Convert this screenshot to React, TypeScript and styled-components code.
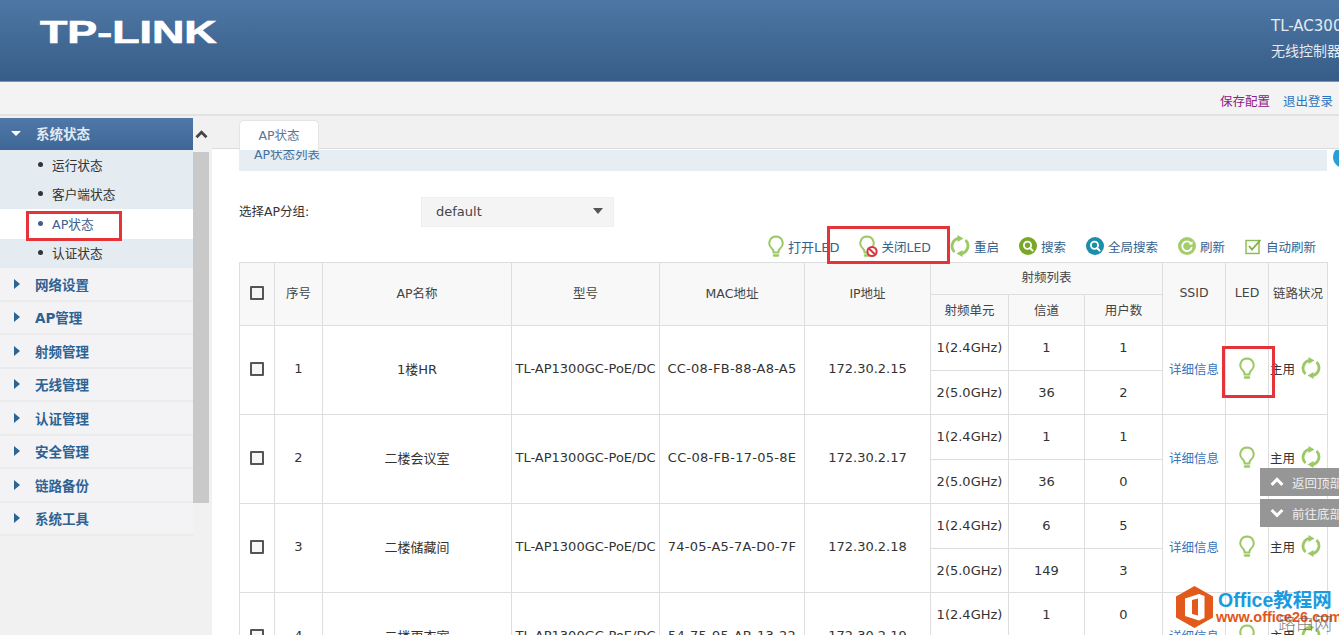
import React from "react";
import styled, { createGlobalStyle } from "styled-components";

const Global = createGlobalStyle`
  html, body { margin: 0; padding: 0; background: #fff; overflow: hidden; }
  * { box-sizing: border-box; }
  body { font-family: "DejaVu Sans", "Noto Sans CJK SC", sans-serif; font-size: 13px; color: #333; }
`;

const Page = styled.div`
  position: relative;
  width: 1339px;
  height: 635px;
  overflow: hidden;
  background: #fff;
`;

const Header = styled.header`
  height: 82px;
  display: flex;
  justify-content: space-between;
  background: linear-gradient(#4f77a5, #365d87);
  border-bottom: 1px solid #7f93a8;
`;

const Logo = styled.div`
  margin: 14px 0 0 40px;
  height: 36px;
  font: 700 32px/36px "Liberation Sans", sans-serif;
  color: #fff;
  -webkit-text-stroke: 0.7px #fff;
  transform: scaleX(1.4);
  transform-origin: left center;
`;

const Product = styled.div`
  width: 68px;
  padding-top: 16px;
  white-space: nowrap;
  color: #e3eaf2;
  font-size: 14px;
`;

const ProductLine = styled.div<{ $size: number; $height: number }>`
  height: ${(p) => p.$height}px;
  line-height: 20px;
  font-size: ${(p) => p.$size}px;
`;

const TopBar = styled.div`
  height: 34px;
  padding: 10px 6px 0 0;
  display: flex;
  justify-content: flex-end;
  gap: 13px;
  background: #f3f3f3;
  border-bottom: 2px solid #e2e2e2;
  font-size: 12.5px;
  line-height: 20px;
`;

const TopLink = styled.a<{ $color: string }>`
  color: ${(p) => p.$color};
`;

const Body = styled.div`
  display: flex;
  height: 519px;
`;

const Sidebar = styled.nav`
  width: 193px;
  padding-top: 2px;
  background: #f1f1f1;
  flex: none;
`;

const GroupHead = styled.div`
  height: 32px;
  display: flex;
  align-items: center;
  padding: 0 0 2px 11px;
  gap: 15px;
  background: linear-gradient(#4e78a8, #3f6796);
  color: #e2eaf3;
  font-weight: 700;
  font-size: 13.5px;
`;

const SubList = styled.div`
  background: #e4ecf2;
`;

const SubItem = styled.div<{ $active?: boolean }>`
  height: 29.5px;
  display: flex;
  align-items: center;
  padding: 0 0 1px 38px;
  gap: 9px;
  font-size: 12.7px;
  background: ${(p) => (p.$active ? "#fff" : "transparent")};
  color: ${(p) => (p.$active ? "#3e5f8e" : "#333")};
`;

const Bullet = styled.i`
  width: 5px;
  height: 5px;
  border-radius: 50%;
  background: currentColor;
`;

const Group = styled.div`
  height: 33.5px;
  display: flex;
  align-items: center;
  padding-left: 14px;
  gap: 15px;
  background: #f3f3f5;
  border-bottom: 2px solid #ebebeb;
  color: #2e6292;
  font-weight: 700;
  font-size: 13.5px;
`;

const CaretRight = styled.i`
  width: 0;
  height: 0;
  border-left: 6px solid #2a6593;
  border-top: 5px solid transparent;
  border-bottom: 5px solid transparent;
`;

const CaretDown = styled.i`
  width: 0;
  height: 0;
  border-top: 5px solid #fff;
  border-left: 5px solid transparent;
  border-right: 5px solid transparent;
`;

const Rail = styled.div`
  width: 19px;
  flex: none;
  background: #f1f1f1;
`;

const RailTop = styled.div`
  height: 36px;
  width: 16px;
  padding-top: 14px;
  display: flex;
  justify-content: center;
`;

const RailThumb = styled.div`
  width: 16px;
  height: 351px;
  background: #c9c9c9;
`;

const Content = styled.main`
  flex: 1;
  min-width: 0;
`;

const TabStrip = styled.div`
  height: 33px;
  padding: 4px 0 0 27px;
  background: #f1f1f1;
  border-bottom: 1px solid #dcdcdc;
`;

const Tab = styled.div`
  position: relative;
  z-index: 1;
  width: 80px;
  height: 30px;
  background: #fff;
  border: 1px solid #e4e4e4;
  border-bottom: 0;
  border-radius: 5px 5px 0 0;
  text-align: center;
  line-height: 30px;
  font-size: 12.5px;
  color: #5b7593;
`;

const Panel = styled.section`
  padding: 1px 12px 0 27px;
`;

const Band = styled.div`
  height: 21px;
  padding-left: 15px;
  background: #e6eef4;
  color: #44719e;
  font-size: 12.5px;
  line-height: 10px;
`;

const FormRow = styled.div`
  margin-top: 26px;
  height: 30px;
  display: flex;
  align-items: center;
`;

const FormLabel = styled.div`
  width: 182px;
  padding-bottom: 3px;
  font-size: 12.5px;
`;

const Select = styled.div`
  width: 193px;
  height: 30px;
  padding: 0 10px 2px 14px;
  display: flex;
  align-items: center;
  justify-content: space-between;
  background: #f4f4f4;
  border: 1px solid #efefef;
  color: #444;
  font-size: 13px;
`;

const SelectCaret = styled.i`
  width: 0;
  height: 0;
  border-top: 6px solid #555;
  border-left: 5px solid transparent;
  border-right: 5px solid transparent;
`;

const Toolbar = styled.div`
  height: 35px;
  padding: 7px 11px 0 0;
  display: flex;
  justify-content: flex-end;
  align-items: flex-start;
  gap: 20px;
`;

const Tool = styled.div<{ $size?: number; $tight?: boolean }>`
  display: flex;
  align-items: center;
  height: 24px;
  gap: ${(p) => (p.$tight ? 3 : 4)}px;
  margin-right: ${(p) => (p.$tight ? -1 : 0)}px;
  color: #33638f;
  font-size: ${(p) => p.$size ?? 12.5}px;
  white-space: nowrap;
`;

const Table = styled.table`
  width: 1088px;
  table-layout: fixed;
  border-collapse: collapse;
  border: 1px solid #dcdcdc;
`;

const Th = styled.th<{ $h?: number }>`
  height: ${(p) => p.$h ?? 31}px;
  padding: 0 0 4px;
  border: 1px solid #dedede;
  background: #f8f8f8;
  font-weight: 400;
  font-size: 12.5px;
  color: #444;
  text-align: center;
  white-space: nowrap;
`;

const SubTh = styled(Th)`
  padding-bottom: 2px;
`;

const Td = styled.td`
  height: 44px;
  padding: 0;
  border: 1px solid #dedede;
  text-align: center;
  white-space: nowrap;
  font-size: 13px;
  color: #333;
`;

const TopTd = styled(Td)`
  height: 45px;
  padding-bottom: 2px;
`;

const SpanTd = styled(Td)`
  padding-bottom: 4px;
`;

const Mac = styled.span`
  letter-spacing: 0.25px;
`;

const Box = styled.span`
  display: inline-block;
  vertical-align: middle;
  width: 14px;
  height: 14px;
  background: #f6f6f6;
  border: 2px solid #555;
  border-radius: 1px;
`;

const DetailLink = styled.a`
  color: #3a73bb;
  font-size: 12.5px;
`;

const LinkState = styled.div`
  display: flex;
  align-items: center;
  gap: 6px;
  padding-left: 1px;
  font-size: 12.5px;
`;

const IconWrap = styled.span`
  display: inline-flex;
  flex: none;
  vertical-align: middle;
`;

const Mark = styled.div<{ $x: number; $y: number; $w: number; $h: number }>`
  position: absolute;
  left: ${(p) => p.$x}px;
  top: ${(p) => p.$y}px;
  width: ${(p) => p.$w}px;
  height: ${(p) => p.$h}px;
  border: 3px solid #e5333a;
  pointer-events: none;
`;

const Floats = styled.div`
  position: absolute;
  left: 1260px;
  top: 468px;
  width: 79px;
  display: flex;
  flex-direction: column;
  gap: 3px;
`;

const FloatBtn = styled.div`
  height: 28px;
  padding-left: 10px;
  display: flex;
  align-items: center;
  gap: 8px;
  background: #969696;
  color: #eee;
  font-size: 12.5px;
  white-space: nowrap;
  overflow: hidden;
`;

const HelpDot = styled.div`
  position: absolute;
  left: 1333px;
  top: 146px;
  width: 22px;
  height: 22px;
  border-radius: 50%;
  background: #2a9fd6;
  clip-path: inset(4px 0 0 0);
`;

const Watermark = styled.div`
  position: absolute;
  left: 1176px;
  top: 586px;
  width: 163px;
  height: 49px;
  display: flex;
  gap: 5px;
`;

const WmText = styled.div`
  position: relative;
  flex: 1;
  min-width: 0;
`;

const WmTitle = styled.div`
  margin-top: 1px;
  font: 700 19.5px/26px "Liberation Sans", "Noto Sans CJK SC", sans-serif;
  color: #1a9be0;
  white-space: nowrap;
`;

const WmUrl = styled.div`
  margin: -3px 0 0 -2px;
  font: 700 14.5px/15px "Liberation Sans", sans-serif;
  color: #e2571a;
  white-space: nowrap;
`;

const WmStamp = styled.div`
  position: absolute;
  right: 7px;
  bottom: 1px;
  font-size: 18px;
  font-weight: 300;
  line-height: 20px;
  color: rgba(90, 90, 90, 0.75);
  white-space: nowrap;
`;

const G = "#9cc865";

const Bulb = ({ off }: { off?: boolean }) => (
  <IconWrap>
    <svg width={off ? 19 : 16} height="23" viewBox={off ? "0 0 19 23" : "0 0 16 23"}>
      <path d="M8 1.5a6.7 6.7 0 0 0-4.3 11.8c1.2 1 1.8 2.4 1.9 4.2h4.8c.1-1.8.7-3.2 1.9-4.2A6.7 6.7 0 0 0 8 1.500z" fill="none" stroke={G} strokeWidth="2" />
      <path d="M6 20.5h4" stroke={G} strokeWidth="2.4" strokeLinecap="round" />
      {off && (
        <g>
          <circle cx="13" cy="16.5" r="4.600" fill="#fff" stroke="#d8343f" strokeWidth="2" />
          <path d="M10 13.5l6 6" stroke="#d8343f" strokeWidth="2" />
        </g>
      )}
    </svg>
  </IconWrap>
);

const Cycle = () => (
  <IconWrap>
    <svg width="20" height="22" viewBox="0 0 20 22">
      <path d="M4.5 17A8 8 0 0 1 8.5 3.4" fill="none" stroke={G} strokeWidth="2.8" />
      <path d="M7.5 0l6 3.5-6 3.500z" fill={G} />
      <path d="M15.5 5A8 8 0 0 1 11.5 18.600" fill="none" stroke={G} strokeWidth="2.8" />
      <path d="M12.5 15l-6 3.5 6 3.500z" fill={G} />
    </svg>
  </IconWrap>
);

const SearchIcon = ({ color }: { color: string }) => (
  <IconWrap>
    <svg width="18" height="18" viewBox="0 0 18 18">
      <circle cx="9" cy="9" r="9" fill={color} />
      <circle cx="8.5" cy="8.2" r="3.6" fill="none" stroke="#fff" strokeWidth="1.8" />
      <path d="M11 11l2.6 2.6" stroke="#fff" strokeWidth="2" strokeLinecap="round" />
    </svg>
  </IconWrap>
);

const RefreshIcon = () => (
  <IconWrap>
    <svg width="18" height="18" viewBox="0 0 18 18">
      <circle cx="9" cy="9" r="9" fill="#a5cc6b" />
      <path d="M13 6.5A4.8 4.8 0 1 0 13.8 10" fill="none" stroke="#fff" strokeWidth="1.8" />
      <path d="M10.8 7.6l3.6.2.2-3.600z" fill="#fff" />
    </svg>
  </IconWrap>
);

const AutoIcon = () => (
  <IconWrap>
    <svg width="17" height="17" viewBox="0 0 17 17">
      <rect x="1" y="2.5" width="13" height="13" fill="#f8fbf2" stroke="#8fb858" strokeWidth="1.4" />
      <path d="M4 8l3 3.5L15.5 2" fill="none" stroke="#7fa83f" strokeWidth="1.6" />
    </svg>
  </IconWrap>
);

const Chevron = ({ up, color, size }: { up: boolean; color: string; size: number }) => (
  <IconWrap>
    <svg width={size} height={size * 0.7} viewBox="0 0 14 10">
      <path d={up ? "M1.5 8L7 2.5 12.5 8" : "M1.5 2L7 7.5 12.5 2"} fill="none" stroke={color} strokeWidth="3" />
    </svg>
  </IconWrap>
);

const OfficeHex = () => (
  <IconWrap>
    <svg width="37" height="42" viewBox="0 0 37 42">
      <path d="M18.5 0L37 10.5v21L18.5 42 0 31.500v-21z" fill="#e2591b" />
      <path d="M9 12.5l14-4.500 5.500 2v22l-5.500 2.500-14-4.500z" fill="#fff" />
      <path d="M16 14l6-1.500v17l-6-1.500z" fill="#e2591b" />
    </svg>
  </IconWrap>
);

const columns = [35, 48, 189, 148, 145, 126, 78, 76, 78, 63, 43, 59];
const sideGroups = ["网络设置", "AP管理", "射频管理", "无线管理", "认证管理", "安全管理", "链路备份", "系统工具"];
const subItems = ["运行状态", "客户端状态", "AP状态", "认证状态"];
const MODEL = "TL-AP1300GC-PoE/DC";
const rows = [
  { no: 1, name: "1楼HR", mac: "CC-08-FB-88-A8-A5", ip: "172.30.2.15", a: ["1", "1"], b: ["36", "2"] },
  { no: 2, name: "二楼会议室", mac: "CC-08-FB-17-05-8E", ip: "172.30.2.17", a: ["1", "1"], b: ["36", "0"] },
  { no: 3, name: "二楼储藏间", mac: "74-05-A5-7A-D0-7F", ip: "172.30.2.18", a: ["6", "5"], b: ["149", "3"] },
  { no: 4, name: "二楼更衣室", mac: "54-75-95-AB-13-22", ip: "172.30.2.19", a: ["1", "0"], b: ["36", "0"] },
];

export default function App() {
  return (
    <Page>
      <Global />
      <Header>
        <Logo>TP-LINK</Logo>
        <Product>
          <ProductLine $size={15} $height={25}>TL-AC300</ProductLine>
          <ProductLine $size={14} $height={26}>无线控制器</ProductLine>
        </Product>
      </Header>
      <TopBar>
        <TopLink $color="#8a2088">保存配置</TopLink>
        <TopLink $color="#2f74c0">退出登录</TopLink>
      </TopBar>
      <Body>
        <Sidebar>
          <GroupHead>
            <CaretDown />
            系统状态
          </GroupHead>
          <SubList>
            {subItems.map((s) => (
              <SubItem key={s} $active={s === "AP状态"}>
                <Bullet />
                {s}
              </SubItem>
            ))}
          </SubList>
          {sideGroups.map((g) => (
            <Group key={g}>
              <CaretRight />
              {g}
            </Group>
          ))}
        </Sidebar>
        <Rail>
          <RailTop>
            <Chevron up color="#444" size={13} />
          </RailTop>
          <RailThumb />
        </Rail>
        <Content>
          <TabStrip>
            <Tab>AP状态</Tab>
          </TabStrip>
          <Panel>
            <Band>AP状态列表</Band>
            <FormRow>
              <FormLabel>选择AP分组:</FormLabel>
              <Select>
                default
                <SelectCaret />
              </Select>
            </FormRow>
            <Toolbar>
              <Tool $size={13}><Bulb />打开LED</Tool>
              <Tool $tight><Bulb off />关闭LED</Tool>
              <Tool><Cycle />重启</Tool>
              <Tool><SearchIcon color="#78a826" />搜索</Tool>
              <Tool><SearchIcon color="#1b8fa8" />全局搜索</Tool>
              <Tool><RefreshIcon />刷新</Tool>
              <Tool><AutoIcon />自动刷新</Tool>
            </Toolbar>
            <Table>
              <colgroup>
                {columns.map((w, i) => (
                  <col key={i} style={{ width: w }} />
                ))}
              </colgroup>
              <thead>
                <tr>
                  <Th rowSpan={2}><Box /></Th>
                  <Th rowSpan={2}>序号</Th>
                  <Th rowSpan={2}>AP名称</Th>
                  <Th rowSpan={2}>型号</Th>
                  <Th rowSpan={2}>MAC地址</Th>
                  <Th rowSpan={2}>IP地址</Th>
                  <Th colSpan={3} $h={32}>射频列表</Th>
                  <Th rowSpan={2}>SSID</Th>
                  <Th rowSpan={2}>LED</Th>
                  <Th rowSpan={2}>链路状况</Th>
                </tr>
                <tr>
                  <SubTh>射频单元</SubTh>
                  <SubTh>信道</SubTh>
                  <SubTh>用户数</SubTh>
                </tr>
              </thead>
              <tbody>
                {rows.map((r) => (
                  <React.Fragment key={r.no}>
                    <tr>
                      <SpanTd rowSpan={2}><Box /></SpanTd>
                      <SpanTd rowSpan={2}>{r.no}</SpanTd>
                      <SpanTd rowSpan={2}>{r.name}</SpanTd>
                      <SpanTd rowSpan={2}>{MODEL}</SpanTd>
                      <SpanTd rowSpan={2}><Mac>{r.mac}</Mac></SpanTd>
                      <SpanTd rowSpan={2}>{r.ip}</SpanTd>
                      <TopTd>1(2.4GHz)</TopTd>
                      <TopTd>{r.a[0]}</TopTd>
                      <TopTd>{r.a[1]}</TopTd>
                      <SpanTd rowSpan={2}><DetailLink>详细信息</DetailLink></SpanTd>
                      <SpanTd rowSpan={2}><Bulb /></SpanTd>
                      <SpanTd rowSpan={2}>
                        <LinkState>主用<Cycle /></LinkState>
                      </SpanTd>
                    </tr>
                    <tr>
                      <Td>2(5.0GHz)</Td>
                      <Td>{r.b[0]}</Td>
                      <Td>{r.b[1]}</Td>
                    </tr>
                  </React.Fragment>
                ))}
              </tbody>
            </Table>
          </Panel>
        </Content>
      </Body>

      <HelpDot />
      <Floats>
        <FloatBtn><Chevron up color="#fff" size={14} />返回顶部</FloatBtn>
        <FloatBtn><Chevron up={false} color="#fff" size={14} />前往底部</FloatBtn>
      </Floats>
      <Watermark>
        <OfficeHex />
        <WmText>
          <WmTitle>Office教程网</WmTitle>
          <WmUrl>www.office26.com</WmUrl>
          <WmStamp>路由网</WmStamp>
        </WmText>
      </Watermark>
      <Mark $x={26} $y={211} $w={96} $h={30} />
      <Mark $x={827} $y={226} $w={123} $h={38} />
      <Mark $x={1222} $y={346} $w={53} $h={52} />
    </Page>
  );
}
